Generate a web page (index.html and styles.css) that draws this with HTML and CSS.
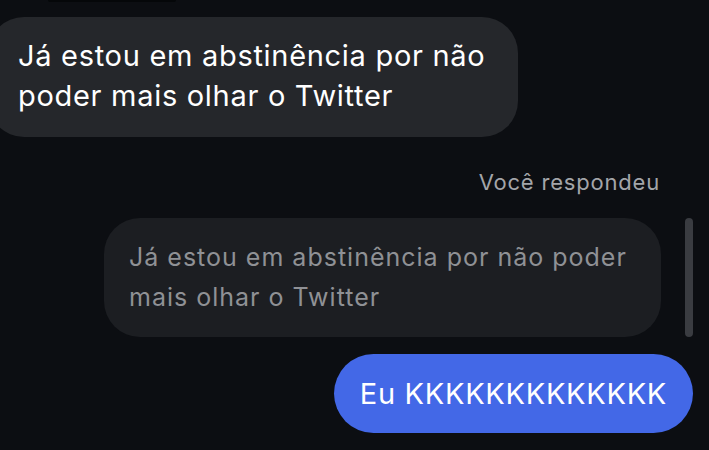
FILE: index.html
```html
<!DOCTYPE html>
<html lang="pt">
<head>
    <meta charset="UTF-8">
    <meta name="viewport" content="width=device-width, initial-scale=1.0">
    <title>Conversa</title>
    <link rel="stylesheet" href="styles.css">
</head>
<body>

<div class="chat">
    <div class="top-stub"></div>

    <div class="row row-left">
        <div class="bubble bubble-in">Já estou em abstinência por não poder mais olhar o Twitter</div>
    </div>

    <div class="reply-label">Você respondeu</div>

    <div class="row row-right quote-row">
        <div class="bubble bubble-quote">Já estou em abstinência por não poder mais olhar o Twitter</div>
        <div class="quote-bar"></div>
    </div>

    <div class="row row-right">
        <div class="bubble bubble-out">Eu KKKKKKKKKKKKK</div>
    </div>
</div>

</body>
</html>
```

FILE: styles.css
```css
body {
    margin: 0;
    background-color: #0c0e12;
    font-family: Inter, 'Liberation Sans', sans-serif;
    width: 709px;
    height: 450px;
    overflow: hidden;
}

.chat {
    display: flex;
    flex-direction: column;
}

.top-stub {
    width: 128px;
    height: 2px;
    margin-left: 48px;
    background-color: #050709;
    border-radius: 0 0 4px 4px;
}

.row {
    display: flex;
}

.row-right {
    justify-content: flex-end;
}

.bubble {
    box-sizing: border-box;
    border-radius: 36px;
}

.bubble-in {
    margin-top: 15px;
    margin-left: -12px;
    width: 530px;
    height: 120px;
    padding: 19px 20px 0 30px;
    background-color: #25272b;
    color: #fff;
    font-size: 29px;
    letter-spacing: 0.7px;
    line-height: 40px;
}

.reply-label {
    margin-top: 31px;
    padding-right: 49px;
    text-align: right;
    color: #a3a5a9;
    font-size: 22px;
    letter-spacing: 0.8px;
    line-height: 28px;
}

.quote-row {
    margin-top: 22px;
    align-items: stretch;
    padding-right: 16px;
}

.bubble-quote {
    width: 557px;
    height: 119px;
    padding: 19px 20px 0 25px;
    background-color: #1c1e22;
    color: #8f9195;
    font-size: 25px;
    letter-spacing: 1px;
    line-height: 40px;
}

.quote-bar {
    width: 8px;
    margin-left: 24px;
    background-color: #3a3c41;
    border-radius: 4px;
}

.bubble-out {
    margin-top: 17px;
    margin-right: 16px;
    height: 79px;
    padding: 0 26px;
    display: flex;
    align-items: center;
    background-color: #4368e7;
    color: #fff;
    font-size: 29px;
    letter-spacing: 0.7px;
    border-radius: 40px;
}
```
